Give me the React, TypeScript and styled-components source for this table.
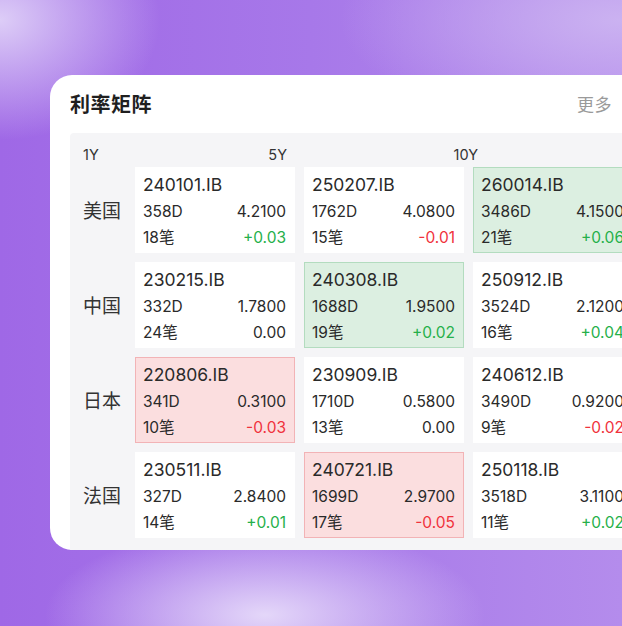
import React from "react";
import styled, { createGlobalStyle } from "styled-components";

const Global = createGlobalStyle`
  html, body { margin: 0; padding: 0; }
  body {
    width: 622px;
    height: 626px;
    overflow: hidden;
    font-family: Inter, "Noto Sans CJK SC", sans-serif;
    background:
      radial-gradient(ellipse 160px 120px at 0px 20px, #ddcdf7 0%, rgba(221,205,247,0) 100%),
      radial-gradient(ellipse 280px 110px at 620px 20px, #cbb2f1 0%, rgba(203,178,241,0) 100%),
      radial-gradient(ellipse 220px 90px at 265px 615px, #e4d7f9 0%, rgba(228,215,249,0) 100%),
      linear-gradient(90deg, #9f68e6 0%, #a778e9 50%, #b48cec 100%);
  }
  #root { width: 622px; height: 626px; }
`;

const Page = styled.div`
  padding: 75px 0 0 50px;
  box-sizing: border-box;
  width: 622px;
  height: 626px;
  overflow: hidden;
`;

const Card = styled.div`
  width: 592px;
  height: 475px;
  background: #ffffff;
  border-radius: 22px 0 0 22px;
  overflow: hidden;
  display: flex;
  flex-direction: column;
  padding-left: 20px;
  box-sizing: border-box;
`;

const TitleBar = styled.div`
  height: 58px;
  display: flex;
  align-items: center;
  justify-content: space-between;
  padding-right: 30px;
  padding-bottom: 2px;
  box-sizing: border-box;
`;

const Title = styled.div`
  font-family: "Noto Sans CJK SC", sans-serif;
  font-size: 20px;
  font-weight: 700;
  color: #1f1f1f;
  letter-spacing: 0.5px;
`;

const More = styled.div`
  font-family: "Noto Sans CJK SC", sans-serif;
  font-size: 17px;
  color: #9a9a9a;
  letter-spacing: 0.5px;
`;

const Panel = styled.div`
  flex: 1;
  background: #f5f5f7;
  border-radius: 4px 0 0 0;
  padding: 13px 0 0 13px;
  display: flex;
  flex-direction: column;
  gap: 3px;
`;

const HeaderRow = styled.div`
  display: flex;
  height: 18px;
  align-items: center;
`;

const HeadCell = styled.div<{ $w: number; $align: "left" | "right" }>`
  width: ${(p) => p.$w}px;
  text-align: ${(p) => p.$align};
  font-size: 14.5px;
  color: #333333;
  line-height: 18px;
`;

const Grid = styled.div`
  display: grid;
  grid-template-columns: 43px 160px 160px 160px;
  grid-auto-rows: 86px;
  column-gap: 9px;
  row-gap: 9px;
`;

const RowLabel = styled.div`
  display: flex;
  align-items: center;
  font-family: "Noto Sans CJK SC", sans-serif;
  font-size: 19px;
  color: #333333;
  padding-bottom: 2px;
`;

type Tone = "plain" | "up" | "down";

const Cell = styled.div<{ $tone: Tone }>`
  box-sizing: border-box;
  padding: 5px 8px 0 7px;
  background: ${(p) =>
    p.$tone === "up" ? "#dcefe1" : p.$tone === "down" ? "#fbdedf" : "#ffffff"};
  border: 1px solid
    ${(p) =>
      p.$tone === "up" ? "#b3dcbf" : p.$tone === "down" ? "#f2b3b6" : "#ffffff"};
  color: #2a2a2a;
`;

const Code = styled.div`
  font-size: 17.5px;
  line-height: 24px;
  margin-bottom: 2px;
  white-space: nowrap;
`;

const Line = styled.div`
  display: flex;
  justify-content: space-between;
  font-size: 15.5px;
  line-height: 26px;
  white-space: nowrap;
`;

const Change = styled.span<{ $dir: number }>`
  color: ${(p) => (p.$dir > 0 ? "#25b04a" : p.$dir < 0 ? "#f0323c" : "#2a2a2a")};
`;

type Item = { code: string; days: string; rate: string; n: string; chg: string; tone: Tone };

const rows: { label: string; items: Item[] }[] = [
  {
    label: "美国",
    items: [
      { code: "240101.IB", days: "358D", rate: "4.2100", n: "18笔", chg: "+0.03", tone: "plain" },
      { code: "250207.IB", days: "1762D", rate: "4.0800", n: "15笔", chg: "-0.01", tone: "plain" },
      { code: "260014.IB", days: "3486D", rate: "4.1500", n: "21笔", chg: "+0.06", tone: "up" },
    ],
  },
  {
    label: "中国",
    items: [
      { code: "230215.IB", days: "332D", rate: "1.7800", n: "24笔", chg: "0.00", tone: "plain" },
      { code: "240308.IB", days: "1688D", rate: "1.9500", n: "19笔", chg: "+0.02", tone: "up" },
      { code: "250912.IB", days: "3524D", rate: "2.1200", n: "16笔", chg: "+0.04", tone: "plain" },
    ],
  },
  {
    label: "日本",
    items: [
      { code: "220806.IB", days: "341D", rate: "0.3100", n: "10笔", chg: "-0.03", tone: "down" },
      { code: "230909.IB", days: "1710D", rate: "0.5800", n: "13笔", chg: "0.00", tone: "plain" },
      { code: "240612.IB", days: "3490D", rate: "0.9200", n: "9笔", chg: "-0.02", tone: "plain" },
    ],
  },
  {
    label: "法国",
    items: [
      { code: "230511.IB", days: "327D", rate: "2.8400", n: "14笔", chg: "+0.01", tone: "plain" },
      { code: "240721.IB", days: "1699D", rate: "2.9700", n: "17笔", chg: "-0.05", tone: "down" },
      { code: "250118.IB", days: "3518D", rate: "3.1100", n: "11笔", chg: "+0.02", tone: "plain" },
    ],
  },
];

const dirOf = (s: string) => (s.startsWith("+") ? 1 : s.startsWith("-") ? -1 : 0);

export default function App() {
  return (
    <>
      <Global />
      <Page>
        <Card>
          <TitleBar>
            <Title>利率矩阵</Title>
            <More>更多</More>
          </TitleBar>
          <Panel>
            <HeaderRow>
              <HeadCell $w={43} $align="left">1Y</HeadCell>
              <HeadCell $w={161} $align="right">5Y</HeadCell>
              <HeadCell $w={191} $align="right">10Y</HeadCell>
            </HeaderRow>
            <Grid>
              {rows.map((r) => (
                <React.Fragment key={r.label}>
                  <RowLabel>{r.label}</RowLabel>
                  {r.items.map((it) => (
                    <Cell key={it.code} $tone={it.tone}>
                      <Code>{it.code}</Code>
                      <Line>
                        <span>{it.days}</span>
                        <span>{it.rate}</span>
                      </Line>
                      <Line>
                        <span>{it.n}</span>
                        <Change $dir={dirOf(it.chg)}>{it.chg}</Change>
                      </Line>
                    </Cell>
                  ))}
                </React.Fragment>
              ))}
            </Grid>
          </Panel>
        </Card>
      </Page>
    </>
  );
}
